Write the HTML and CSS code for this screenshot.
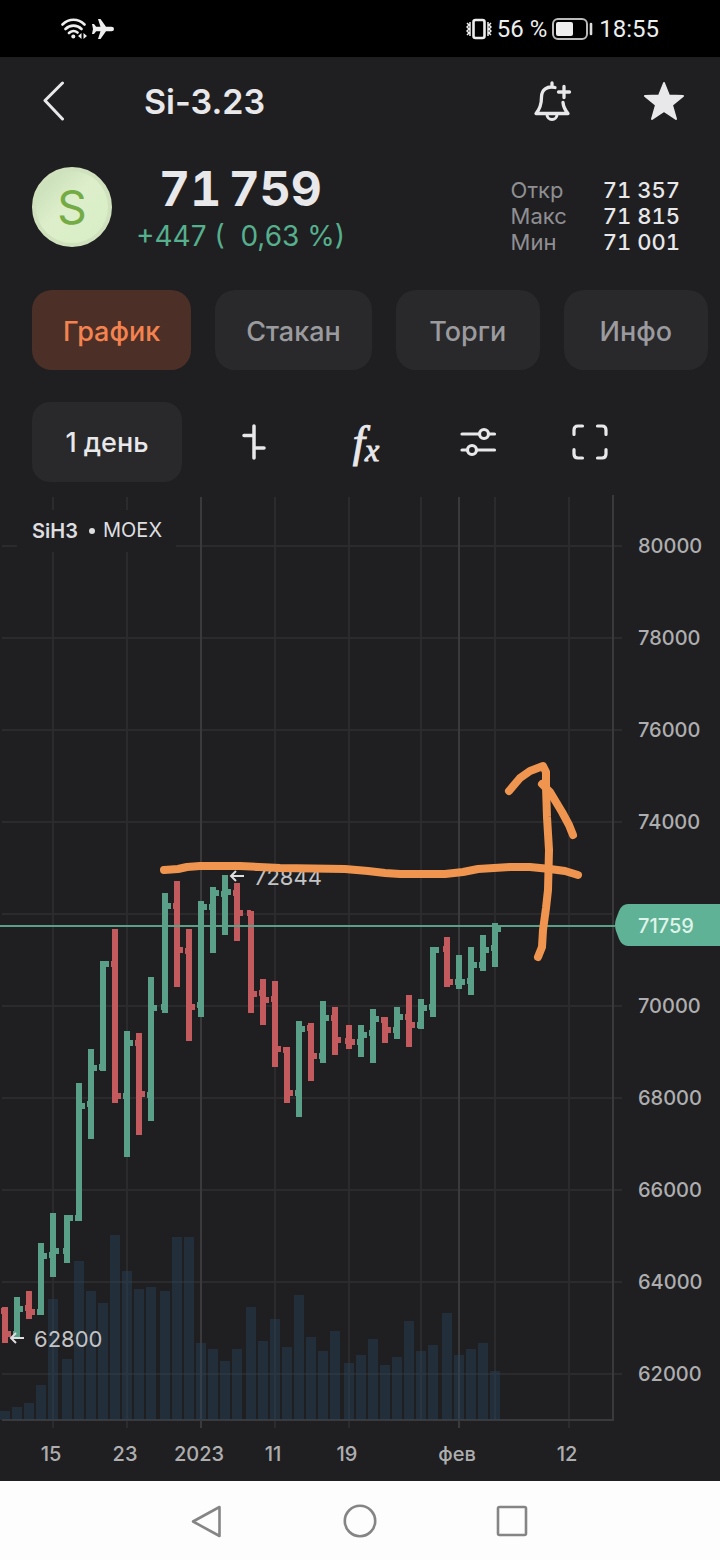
FILE: index.html
```html
<!DOCTYPE html>
<html lang="ru">
<head>
    <meta charset="UTF-8">
    <meta name="viewport" content="width=device-width, initial-scale=1.0">
    <link rel="stylesheet" href="styles.css">
    <title>Si-3.23</title>
</head>
<body>
    <!-- Status bar -->
    <div class="status-bar">
        <div class="status-group">
            <svg width="26" height="22" viewBox="0 0 26 22" fill="none" stroke="#eee" stroke-width="2.6" stroke-linecap="round">
                <path d="M1.5 6.5C8 .2 17 .2 23.500 6.500M4.500 11C9 6.500 16 6.500 20.500 11M8 15C10.500 12.500 14 12.500 16.500 14.500"/>
                <circle cx="12.300" cy="18.500" r="2" fill="#eee" stroke="none"/>
                <path d="M17 18l3.500-3v6zM26 18l-3.500-3v6z" fill="#eee" stroke="none"/>
            </svg>
            <svg width="22" height="22" viewBox="0 0 22 22" fill="#eee">
                <path d="M22 11q0-2.200-2.500-2.200H14L8.500 1H6l2.500 7.800H4.200L2 6H0l1 5-1 5h2l2.200-2.800h4.300L6 21h2.500L14 13.200h5.500q2.500 0 2.500-2.200z"/>
            </svg>
        </div>
        <div class="status-group">
            <svg width="26" height="22" viewBox="0 0 26 22" fill="none" stroke="#eee">
                <rect x="7.500" y="2" width="11" height="18" rx="2" stroke-width="2.600"/>
                <path d="M1 5l2 2-2 2 2 2-2 2 2 2-2 2M4 4v14M25 5l-2 2 2 2-2 2 2 2-2 2 2 2M22 4v14" stroke-width="1.500"/>
            </svg>
            <span>56 %</span>
            <svg width="41" height="22" viewBox="0 0 41 22">
                <rect x="1" y="1" width="34" height="20" rx="5" fill="none" stroke="#bbb" stroke-width="2"/>
                <rect x="4" y="4" width="17" height="14" rx="2" fill="#eee"/>
                <path d="M39 6v10" stroke="#ddd" stroke-width="2.600" stroke-linecap="round"/>
            </svg>
            <span class="clock">18:55</span>
        </div>
    </div>

    <!-- Header -->
    <header class="header">
        <button class="back-button" aria-label="Назад">
            <svg width="24" height="40" viewBox="0 0 24 40" fill="none" stroke="#e8e7ea" stroke-width="3" stroke-linecap="round" stroke-linejoin="round">
                <path d="M20.500 2L3 19.500 20.500 38"/>
            </svg>
        </button>
        <h1 class="title">Si-3.23</h1>
        <button class="icon-button" aria-label="Уведомление">
            <svg width="40" height="42" viewBox="0 0 40 42" fill="none" stroke="#e8e7ea" stroke-width="3" stroke-linecap="round" stroke-linejoin="round">
                <path d="M23 7.500C15 5.500 9.500 10 9.500 17C9.500 25 8 29 4 33.500H36C33 30 31.500 28 31 22.500M20 3V6" stroke-width="3.300"/>
                <path d="M32 6.500V17.500M26.500 12H37.500" stroke-width="3.300"/>
                <path d="M15 34.500a5 5 0 0 0 10 0"/>
            </svg>
        </button>
        <button class="icon-button" aria-label="В избранное">
            <svg width="40" height="40" viewBox="0 0 40 40" fill="#e8e7ea" stroke="#e8e7ea" stroke-width="2" stroke-linejoin="round">
                <path d="M20 2l5 12.500 14 .500-11 9 4 14-12-8-12 8 4-14-11-9 14-.5z"/>
            </svg>
        </button>
    </header>

    <!-- Price block -->
    <section class="quote">
        <div class="avatar">S</div>
        <div class="price-box">
            <div class="price">71&#8201;759</div>
            <div class="change">+447 (&nbsp; 0,63 %)</div>
        </div>
        <table class="ohlc">
            <tr><th scope="row">Откр</th><td>71 357</td></tr>
            <tr><th scope="row">Макс</th><td>71 815</td></tr>
            <tr><th scope="row">Мин</th><td>71 001</td></tr>
        </table>
    </section>

    <!-- Tabs -->
    <nav class="tabs">
        <button class="tab active">График</button>
        <button class="tab">Стакан</button>
        <button class="tab">Торги</button>
        <button class="tab">Инфо</button>
    </nav>

    <!-- Chart toolbar -->
    <div class="toolbar">
        <button class="period">1 день</button>
        <button class="icon-button" aria-label="Тип графика">
            <svg width="28" height="38" viewBox="0 0 28 38" fill="none" stroke="#e8e7ea" stroke-width="3.500" stroke-linecap="round">
                <path d="M14 3V35M4 12.500H14M14 25H24"/>
            </svg>
        </button>
        <button class="icon-button fx" aria-label="Индикаторы"><i>f</i><sub>x</sub></button>
        <button class="icon-button" aria-label="Настройки">
            <svg width="38" height="34" viewBox="0 0 38 34" fill="none" stroke="#e8e7ea" stroke-width="3.200" stroke-linecap="round">
                <path d="M3 9H20M30 9H35.500M3 25H8M18 25H35.500"/>
                <circle cx="25" cy="9" r="4.500"/>
                <circle cx="13" cy="25" r="4.500"/>
            </svg>
        </button>
        <button class="icon-button" aria-label="На весь экран">
            <svg width="38" height="38" viewBox="0 0 38 38" fill="none" stroke="#e8e7ea" stroke-width="3.200" stroke-linecap="round">
                <path d="M3 11.500V7Q3 3 7 3H11.500M26.500 3H31Q35 3 35 7V11.500M35 26.500V31Q35 35 31 35H26.500M11.500 35H7Q3 35 3 31V26.500"/>
            </svg>
        </button>
    </div>

    <!-- Chart -->
    <main class="chart">
        <svg class="chart-svg" viewBox="0 494 720 987">
            <g id="grid"></g>
            <rect class="legend-bg" x="17" y="510" width="159" height="42"/>
            <text class="legend ticker" x="32" y="538">SiH3</text>
            <circle class="legend-dot" cx="92" cy="531" r="3"/>
            <text class="legend" x="103" y="537">MOEX</text>
            <g id="bars"></g>
            <g id="volumes"></g>
            <path class="price-line" d="M0 926H615"/>

            <!-- High / low marks -->
            <path class="mark-arrow" d="M244 876H231M236 871L231 876L236 881"/>
            <text class="mark" x="254" y="885">72844</text>
            <path class="mark-arrow" d="M24 1338H11M16 1333L11 1338L16 1343"/>
            <text class="mark" x="34" y="1347">62800</text>

            <!-- Last price -->
            <path class="badge" d="M720 904H628Q622 904 619 911L616 919Q614 925 616 931L619 939Q622 946 628 946H720Z"/>
            <text class="badge-text" x="638" y="933">71759</text>

            <!-- Hand drawn arrow -->
            <g class="pen">
                <path d="M164 870L178 869 187 867 200 866 240 866 280 868 345 869 368 871 385 873 400 874 445 874 463 872 478 869 510 867 530 867 550 869 565 871 578 875"/>
                <path d="M538 957L542 947 543 930 546 908 548 890 549 850 547 817 546 787 546 772 543 766 530 771 520 778 509 791"/>
                <path d="M542 784L550 792 562 812 569 825 573 835"/>
            </g>
        </svg>
    </main>

    <!-- System navigation -->
    <nav class="system-nav">
        <button class="system-button" aria-label="Назад">
            <svg width="38" height="36" viewBox="0 0 38 36" fill="none" stroke="#858585" stroke-width="2.600" stroke-linejoin="round"><path d="M30.500 4V33L4 18.500Z"/></svg>
        </button>
        <button class="system-button" aria-label="Домой">
            <svg width="34" height="34" viewBox="0 0 34 34" fill="none" stroke="#858585" stroke-width="2.600"><circle cx="17" cy="17" r="15.200"/></svg>
        </button>
        <button class="system-button" aria-label="Недавние">
            <svg width="32" height="32" viewBox="0 0 32 32" fill="none" stroke="#858585" stroke-width="2.600"><rect x="2" y="2" width="28" height="28" rx="1.500"/></svg>
        </button>
    </nav>

    <script src="chart.js"></script>
</body>
</html>
```
FILE: styles.css
```css
/* Base */
* {
    box-sizing: border-box;
}

body {
    margin: 0;
    min-height: 100vh;
    display: flex;
    flex-direction: column;
    background-color: #1f1f21;
    color: #e8e7ea;
    font-family: Inter, sans-serif;
}

button {
    border: none;
    padding: 0;
    background: none;
    color: inherit;
    font-family: inherit;
    cursor: pointer;
}

svg {
    display: block;
}

/* Status bar */
.status-bar {
    display: flex;
    justify-content: space-between;
    align-items: center;
    height: 57px;
    padding: 0 61px;
    background-color: #000;
    color: #eee;
    font-family: Roboto, sans-serif;
    font-size: 24px;
}

.status-group {
    display: flex;
    align-items: center;
    gap: 5px;
}

.clock {
    margin-left: 1px;
}

/* Header */
.header {
    display: flex;
    align-items: center;
    height: 88px;
}

.back-button {
    display: flex;
    justify-content: center;
    width: 108px;
}

.title {
    flex: 1;
    margin: 0;
    padding-left: 36px;
    font-size: 34px;
    font-weight: 600;
}

.icon-button {
    display: flex;
    justify-content: center;
    align-items: center;
    width: 112px;
    height: 80px;
}

/* Price block */
.quote {
    display: flex;
    align-items: center;
    height: 124px;
    padding: 0 40px 0 32px;
}

.avatar {
    display: flex;
    justify-content: center;
    align-items: center;
    width: 80px;
    height: 80px;
    border: 4px solid #cfe2bd;
    border-radius: 50%;
    background: linear-gradient(135deg, #c5d9b5, #dcefca 45%, #d8edc6);
    color: #74ab45;
    font-size: 46px;
}

.price-box {
    margin-left: 24px;
    padding-top: 8px;
    text-align: center;
}

.price {
    font-size: 48px;
    font-weight: 700;
    font-variant-numeric: tabular-nums;
    line-height: 50px;
}

.change {
    color: #56b08d;
    font-size: 28px;
    line-height: 44px;
}

.ohlc {
    margin-left: auto;
    margin-top: 18px;
    border-collapse: collapse;
    font-size: 22px;
    line-height: 26px;
}

.ohlc th {
    padding: 0 36px 0 0;
    color: #8f8f93;
    font-weight: 400;
    text-align: left;
}

.ohlc td {
    padding: 0;
    font-weight: 500;
    font-variant-numeric: tabular-nums;
    text-align: right;
}

/* Tabs */
.tabs {
    display: flex;
    gap: 24px;
    margin-top: 21px;
    padding-left: 32px;
    overflow: hidden;
}

.tab {
    min-width: 144px;
    height: 80px;
    padding: 3px 31px 0;
    border-radius: 20px;
    background-color: #29292b;
    color: #9b9b9f;
    font-size: 27px;
    font-weight: 500;
}

.tab.active {
    background-color: #4c3028;
    color: #f5834f;
}

/* Chart toolbar */
.toolbar {
    display: flex;
    align-items: center;
    margin-top: 32px;
    padding-left: 32px;
}

.period {
    width: 150px;
    height: 80px;
    margin-right: 16px;
    border-radius: 18px;
    background-color: #29292b;
    font-size: 27px;
    font-weight: 500;
}

.fx {
    font-family: "Liberation Serif", serif;
    font-size: 44px;
    -webkit-text-stroke: 1px #e8e7ea;
}

.fx sub {
    padding-top: 16px;
    font-size: 32px;
    font-style: italic;
}

/* Chart */
.chart {
    margin-top: 12px;
}

.chart-svg {
    width: 100%;
}

.grid-line {
    stroke: #2b2b2d;
    stroke-width: 2;
}

.grid-line.strong {
    stroke: #3a3a3c;
}

.axis-label {
    fill: #aeaeb0;
    font-size: 20px;
    font-weight: 500;
}

.legend-bg {
    fill: #1f1f21;
}

.legend {
    fill: #dedee0;
    font-size: 20px;
}

.legend-dot {
    fill: #dedee0;
}

.ticker {
    font-weight: 600;
}

.bar {
    fill: none;
    stroke-width: 6;
}

.bar.up {
    stroke: #5a9f87;
}

.bar.down {
    stroke: #c25a5e;
}

.volume {
    fill: #29465f;
    fill-opacity: 0.4;
}

.price-line {
    stroke: #5a9f87;
    stroke-width: 2;
}

.mark {
    fill: #c4c4c6;
    font-size: 22px;
}

.mark-arrow {
    fill: none;
    stroke: #dedee0;
    stroke-width: 2;
}

.badge {
    fill: #5fb295;
}

.badge-text {
    fill: #dff3ea;
    font-size: 20px;
    font-weight: 500;
}

.pen {
    fill: none;
    stroke: #f0954f;
    stroke-width: 8;
    stroke-linecap: round;
    stroke-linejoin: round;
}

/* System navigation */
.system-nav {
    display: flex;
    justify-content: center;
    gap: 72px;
    height: 79px;
    margin-top: auto;
    background-color: #fdfdfd;
}

.system-button {
    display: flex;
    justify-content: center;
    align-items: center;
    width: 80px;
}
```
FILE: chart.js
```js
const SVG_NS = "http://www.w3.org/2000/svg";
const BASE_Y = 1420;

// x, high, low, open, close, volume top
const bars = [
    [5, 1307, 1343, 1311, 1334, 1411],
    [17, 1297, 1337, 1334, 1309, 1407],
    [29, 1291, 1319, 1308, 1312, 1403],
    [41, 1243, 1315, 1312, 1256, 1385],
    [53, 1213, 1277, 1255, 1251, 1299],
    [67, 1215, 1263, 1251, 1218, 1359],
    [79, 1083, 1221, 1218, 1106, 1261],
    [91, 1049, 1139, 1104, 1068, 1291],
    [103, 961, 1071, 1067, 964, 1303],
    [115, 929, 1103, 964, 1096, 1235],
    [127, 1031, 1157, 1096, 1043, 1271],
    [139, 1033, 1135, 1043, 1094, 1289],
    [151, 977, 1121, 1095, 1008, 1287],
    [165, 893, 1013, 1007, 906, 1291],
    [177, 881, 987, 906, 950, 1237],
    [189, 929, 1041, 951, 1007, 1237],
    [201, 901, 1017, 1005, 907, 1343],
    [213, 887, 953, 907, 893, 1349],
    [225, 875, 935, 894, 892, 1361],
    [237, 883, 941, 893, 913, 1349],
    [251, 911, 1013, 913, 994, 1307],
    [263, 979, 1025, 993, 1000, 1341],
    [275, 981, 1067, 999, 1049, 1319],
    [287, 1047, 1103, 1050, 1093, 1347],
    [299, 1021, 1117, 1093, 1029, 1295],
    [311, 1023, 1081, 1028, 1056, 1337],
    [323, 1001, 1063, 1056, 1018, 1351],
    [335, 1007, 1055, 1018, 1040, 1331],
    [349, 1025, 1049, 1041, 1042, 1363],
    [361, 1025, 1057, 1042, 1035, 1355],
    [373, 1009, 1063, 1033, 1019, 1339],
    [385, 1017, 1043, 1020, 1030, 1365],
    [397, 1007, 1039, 1030, 1017, 1357],
    [409, 995, 1047, 1017, 1025, 1321],
    [421, 999, 1029, 1025, 1008, 1351],
    [433, 947, 1017, 1007, 950, 1345],
    [447, 937, 987, 949, 982, 1313],
    [459, 955, 989, 982, 982, 1355],
    [471, 947, 995, 981, 965, 1349],
    [483, 935, 971, 965, 950, 1343],
    [495, 923, 967, 948, 929, 1371]
];

// x, label, strong line
const dates = [
    [53, "15"], [127, "23"], [201, "2023", true], [275, "11"], [349, "19"],
    [421, ""], [459, "фев", true], [495, ""], [569, "12"]
];

function add(parent, tag, className, attrs, text) {
    const el = document.createElementNS(SVG_NS, tag);
    el.setAttribute("class", className);
    for (const name in attrs) {
        el.setAttribute(name, attrs[name]);
    }
    if (text) {
        el.textContent = text;
    }
    parent.appendChild(el);
}

const grid = document.getElementById("grid");
const barLayer = document.getElementById("bars");
const volumeLayer = document.getElementById("volumes");

// Price lines, the last price badge covers the 72000 label
for (let price = 80000; price >= 62000; price -= 2000) {
    const y = 546 + (80000 - price) * 0.046;
    const covered = price === 72000;
    add(grid, "path", "grid-line", { d: `M2 ${y}H${covered ? 613 : 622}` });
    if (!covered) {
        add(grid, "text", "axis-label", { x: 638, y: y + 7 }, String(price));
    }
}

// Date lines
dates.forEach(([x, label, strong]) => {
    add(grid, "path", strong ? "grid-line strong" : "grid-line", { d: `M${x} 497V${label ? 1428 : BASE_Y}` });
    if (label) {
        add(grid, "text", "axis-label", { x: x - 2, y: 1461, "text-anchor": "middle" }, label);
    }
});
add(grid, "path", "grid-line strong", { d: `M2 ${BASE_Y}H613V495`, fill: "none" });

bars.forEach(([x, high, low, open, close, volume]) => {
    const direction = close > open ? "down" : "up";
    add(barLayer, "path", `bar ${direction}`, { d: `M${x} ${high}V${low}M${x - 4} ${open}H${x}M${x} ${close}H${x + 6}` });
    add(volumeLayer, "rect", "volume", { x: x - 5, y: volume, width: 10, height: BASE_Y - volume });
});
```
